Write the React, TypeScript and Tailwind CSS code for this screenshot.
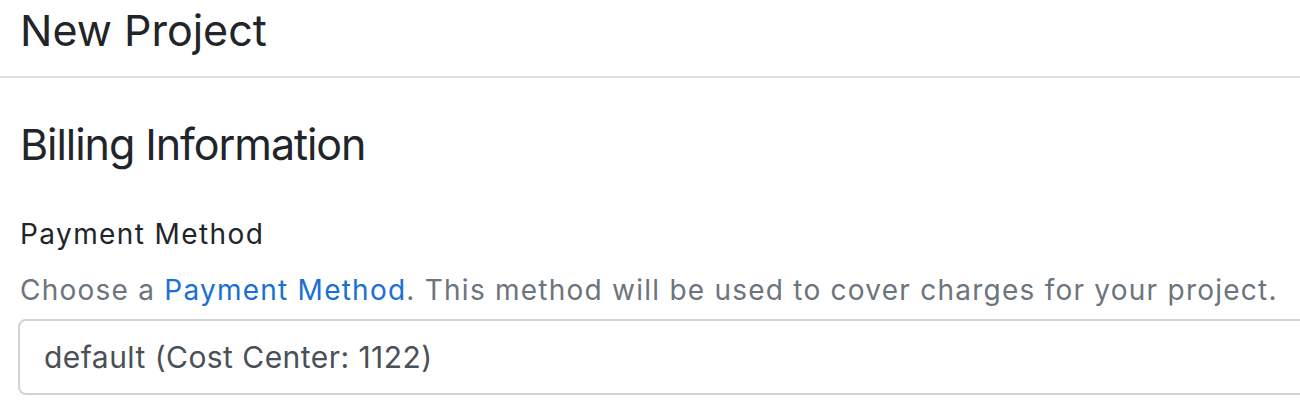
import React from 'react';

export default function App() {
  return (
    <div className="w-[1300px] h-[414px] overflow-hidden bg-white font-['Inter',sans-serif]">
      <div className="h-[78px] border-b-2 border-[#dee2e6] px-[20px]">
        <h1 className="pt-[4px] text-[43px] leading-[52px] font-normal text-[#212529]">New Project</h1>
      </div>
      <div className="px-[18px]">
        <h2 className="pl-[2px] mt-[40px] text-[43px] leading-[52px] tracking-[-1.05px] font-normal text-[#212529]">
          Billing Information
        </h2>
        <label className="block pl-[2px] mt-[46px] text-[28px] leading-[36px] tracking-[1.4px] text-[#212529]">
          Payment Method
        </label>
        <p className="pl-[2px] mt-[20px] text-[28px] leading-[36px] tracking-[1.24px] text-[#6c757d] whitespace-nowrap">
          Choose a <a className="text-[#1a6fd6]">Payment Method</a>. This method will be used to cover charges for your project.
        </p>
        <div className="mt-[11px] h-[76px] w-[1400px] rounded-[8px] border-2 border-[#ced4da] flex items-center px-[24px] text-[30px] tracking-[0.45px] text-[#495057]">
          default (Cost Center: 1122)
        </div>
      </div>
    </div>
  );
}
